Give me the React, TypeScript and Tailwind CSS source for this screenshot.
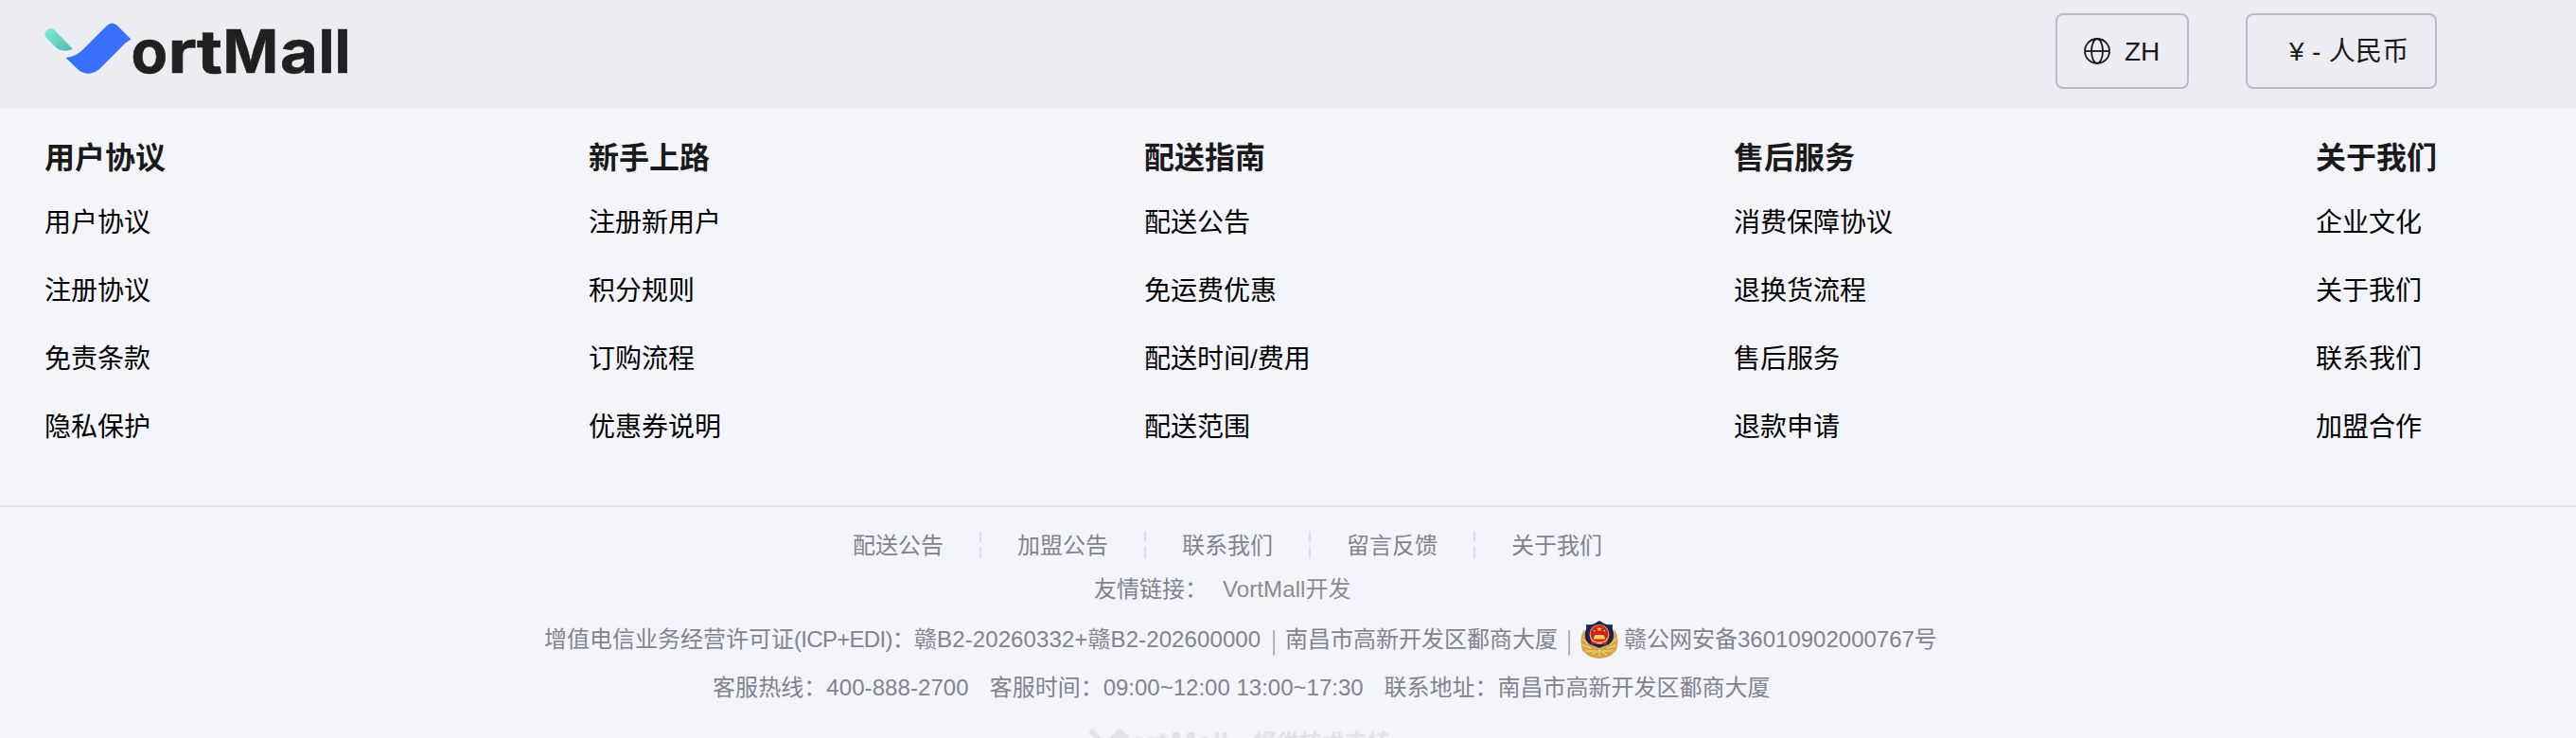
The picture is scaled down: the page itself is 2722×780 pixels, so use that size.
const columns = [
  { title: '用户协议', items: ['用户协议', '注册协议', '免责条款', '隐私保护'] },
  { title: '新手上路', items: ['注册新用户', '积分规则', '订购流程', '优惠券说明'] },
  { title: '配送指南', items: ['配送公告', '免运费优惠', '配送时间/费用', '配送范围'] },
  { title: '售后服务', items: ['消费保障协议', '退换货流程', '售后服务', '退款申请'] },
  { title: '关于我们', items: ['企业文化', '关于我们', '联系我们', '加盟合作'] },
];

const links = ['配送公告', '加盟公告', '联系我们', '留言反馈', '关于我们'];

function Logo() {
  return (
    <svg width="330" height="60" viewBox="0 0 330 60" className="block overflow-visible">
      <defs>
        <linearGradient id="leaf" x1="0" y1="0" x2="1" y2="1">
          <stop offset="0.1" stopColor="#75ead7" />
          <stop offset="1" stopColor="#57b4b2" />
        </linearGradient>
      </defs>
      <path d="M2 16C-3 10 5 2 11 8L30 28Q20 32 13 27Z" fill="url(#leaf)" />
      <path d="M22.500 37Q34 36 42 27L66 3Q71.500 -2 77 3L91.500 17.500Q85 21 80 27L58 49Q47 58 36 50Z" fill="#3970fb" />
      <g fontFamily="Inter, sans-serif" fontWeight="700" fontSize="63" fill="#202020" stroke="#202020" strokeWidth="0.600">
        <text x="91.500" y="53">o</text>
        <text x="130.500" y="53" textLength="30" lengthAdjust="spacingAndGlyphs">r</text>
        <text x="161" y="53" textLength="27" lengthAdjust="spacingAndGlyphs">t</text>
        <text x="188.500" y="53">M</text>
        <text x="249" y="53" textLength="40" lengthAdjust="spacingAndGlyphs">a</text>
        <text x="289.500" y="53">l</text>
        <text x="306.500" y="53">l</text>
      </g>
    </svg>
  );
}

function Globe() {
  return (
    <svg width="30" height="30" viewBox="0 0 30 30" fill="none" stroke="#1a1a1a" strokeWidth="1.800">
      <circle cx="15" cy="15" r="13" />
      <ellipse cx="15" cy="15" rx="6" ry="13" />
      <path d="M2 15H28" />
    </svg>
  );
}

function PoliceBadge() {
  return (
    <svg width="40" height="40" viewBox="0 0 40 40" className="block shrink-0">
      <path d="M4 9Q-1 18 1 26Q1 32 5 34Q8 39 20 40Q32 39 35 34Q39 32 39 26Q41 18 36 9Q34 26 20 29Q6 26 4 9Z" fill="#d5a344" />
      <path d="M2 19L9 25M2 26L12 29M5 32L16 32M38 19L31 25M38 26L28 29M35 32L24 32M20 28V38M12 36L20 31L28 36" stroke="#f1cc78" strokeWidth="1.400" fill="none" />
      <path d="M20 0L25 3Q29 5 34 4Q33 8 35 12Q36 22 30 25L20 29L10 25Q4 22 5 12Q7 8 6 4Q11 5 15 3Z" fill="#17264f" />
      <circle cx="20" cy="14.500" r="10.500" fill="#e0ae4a" />
      <circle cx="20" cy="14" r="9.300" fill="#d51f22" />
      <path d="M11 21L12 25H28L29 21L20 24Z" fill="#c9211f" />
      <path d="M20 6L20.700 8H23L21.200 9.200L21.900 11.300L20 10L18.100 11.300L18.800 9.200L17 8H19.300ZM14 18L15.500 15H24.500L26 18V19.500H14ZM14 10h1.500v1.500h-1.500zM24.500 10h1.500v1.500h-1.500z" fill="#f5ce55" />
      <path d="M12 21Q20 25 28 21M17 24H23" stroke="#f0c35a" strokeWidth="1.200" fill="none" />
    </svg>
  );
}

function Pipe() {
  return <span className="w-6 text-center font-['Noto_Sans_CJK_SC',sans-serif] font-light">|</span>;
}

export default function App() {
  return (
    <div className="flex h-[780px] w-[2722px] flex-col overflow-hidden bg-[#f4f5fa] font-['Liberation_Sans','Noto_Sans_CJK_SC',sans-serif] text-[28px] text-black">
      <header className="flex h-[114px] shrink-0 items-start justify-between bg-[#ecedf3] pr-[147px] pl-[47px]">
        <div className="pt-6">
          <Logo />
        </div>
        <div className="flex gap-[60px] pt-[14px] text-[#1a1a1a]">
          <div className="flex h-20 w-[141px] items-center rounded-lg border-2 border-[#babbc6] pl-[27px]">
            <Globe />
            <span className="ml-[14px] pt-0.5 leading-10">ZH</span>
          </div>
          <div className="flex h-20 w-[202px] items-center rounded-lg border-2 border-[#babbc6] pt-0.5 pl-[44px] tracking-[0.3px] whitespace-pre">
            ¥ - 人民币
          </div>
        </div>
      </header>

      <section className="flex h-[420px] shrink-0 justify-between pt-[29px] pr-[147px] pl-[47px]">
        {columns.map((c) => (
          <div key={c.title}>
            <h3 className="h-[57px] text-[32px] leading-[48px] font-bold text-[#1a1a1a]">{c.title}</h3>
            {c.items.map((i) => (
              <p key={i} className="h-[72px] leading-[72px] whitespace-nowrap">
                {i}
              </p>
            ))}
          </div>
        ))}
      </section>

      <footer className="flex h-[246px] shrink-0 flex-col border-t-2 border-[#e5e6eb] text-2xl whitespace-pre text-[#82838d]">
        <nav className="mt-5 flex h-10 shrink-0 items-center pl-[901px]">
          {links.map((l, i) => (
            <div key={l} className="flex items-center">
              {i > 0 && (
                <span className="mr-[38px] ml-[39px] flex flex-col gap-[5px]">
                  <i className="h-[11px] w-[2px] bg-[#dcdeeb]" />
                  <i className="h-3 w-[2px] bg-[#dcdeeb]" />
                </span>
              )}
              <span className="w-[95px] pt-0.5">{l}</span>
            </div>
          ))}
        </nav>
        <div className="mt-[7px] flex h-10 shrink-0 items-center pl-[1156px] leading-10">
          <span className="w-[136px]">友情链接：</span>
          <span className="tracking-[0.1px] text-[#8c8c8c]">VortMall开发</span>
        </div>
        <div className="mt-[13px] flex h-10 shrink-0 items-center pl-[575px] leading-10">
          <span>增值电信业务经营许可证</span>
          <span className="w-[127px] tracking-[-0.7px]">(ICP+EDI)：</span>
          <span className="w-[368px] tracking-[0.1px]">赣B2-20260332+赣B2-202600000</span>
          <Pipe />
          <span>南昌市高新开发区鄱商大厦</span>
          <Pipe />
          <PoliceBadge />
          <span className="ml-1.5">赣公网安备36010902000767号</span>
        </div>
        <div className="mt-[11px] flex h-10 shrink-0 items-center gap-[22px] pl-[753px] leading-10">
          <span className="tracking-[0.07px]">客服热线：400-888-2700</span>
          <span>客服时间：09:00~12:00 13:00~17:30</span>
          <span>联系地址：南昌市高新开发区鄱商大厦</span>
        </div>
        <div className="mt-[22px] flex h-10 shrink-0 items-start pl-[1151px] text-[#e2e3e5]">
          <svg width="146" height="34" viewBox="0 0 146 34" className="block shrink-0">
            <path d="M3 5L13 15" stroke="#e2e3e5" strokeWidth="6" strokeLinecap="round" />
            <path d="M10 19Q16 17 20 12L29 3Q32 0 35 3L43 10L26 26Q21 29 17 26Z" fill="#e2e3e5" />
            <text x="43 61 73 86 113 131 139" y="26" fontFamily="Inter, sans-serif" fontWeight="700" fontSize="29" fill="#e2e3e5">
              ortMall
            </text>
          </svg>
          <span className="ml-6 text-2xl leading-8 font-bold italic">提供技术支持</span>
        </div>
      </footer>
    </div>
  );
}
